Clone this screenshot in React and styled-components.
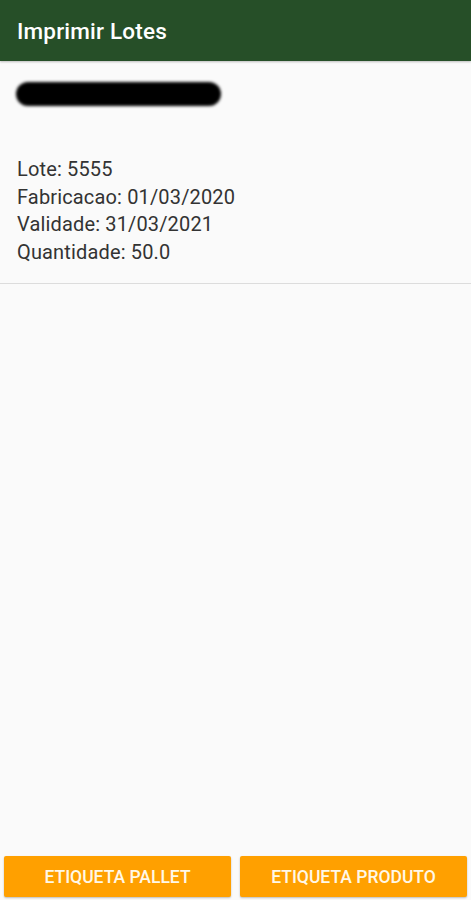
import React from "react";
import styled, { createGlobalStyle } from "styled-components";

const GlobalStyles = createGlobalStyle`
  html, body {
    margin: 0;
    padding: 0;
    background: #fafafa;
    font-family: Roboto, "Liberation Sans", sans-serif;
  }
`;

const lote = {
  numero: "5555",
  fabricacao: "01/03/2020",
  validade: "31/03/2021",
  quantidade: "50.0",
};

const App = () => {
  return (
    <>
      <GlobalStyles />
      <Page>
        <Header>
          <Title>Imprimir Lotes</Title>
        </Header>
        <Card>
          <Redacted />
          <Info>
            <Line>Lote: {lote.numero}</Line>
            <Line>Fabricacao: {lote.fabricacao}</Line>
            <Line>Validade: {lote.validade}</Line>
            <Line>Quantidade: {lote.quantidade}</Line>
          </Info>
        </Card>
        <Spacer />
        <Footer>
          <Button>Etiqueta Pallet</Button>
          <Button>Etiqueta Produto</Button>
        </Footer>
      </Page>
    </>
  );
};

const Page = styled.div`
  height: 900px;
  display: flex;
  flex-direction: column;
  background: #fafafa;
`;
const Header = styled.div`
  height: 61px;
  background: #264f28;
  display: flex;
  align-items: center;
  padding: 0 17px;
  box-shadow: 0 1px 2px rgba(0, 0, 0, 0.25);
`;
const Title = styled.h1`
  margin: 0;
  color: #ffffff;
  font-size: 22.5px;
  font-weight: 500;
  letter-spacing: 0.2px;
`;
const Card = styled.div`
  padding: 21px 17px 16px;
  border-bottom: 1px solid #dcdcdc;
`;
const Redacted = styled.div`
  width: 205px;
  height: 24px;
  margin-left: -1px;
  background: #000;
  border-radius: 12px;
  filter: blur(1.8px);
`;
const Info = styled.div`
  margin-top: 50px;
  display: flex;
  flex-direction: column;
`;
const Line = styled.div`
  font-size: 20px;
  line-height: 27.7px;
  letter-spacing: 0.15px;
  color: #333333;
`;
const Spacer = styled.div`
  flex: 1;
`;
const Footer = styled.div`
  display: grid;
  grid-template-columns: 1fr 1fr;
  gap: 9px;
  padding: 0 4px 3px;
`;
const Button = styled.button`
  height: 41px;
  border: none;
  border-radius: 2px;
  background: #ffa000;
  color: #fff8e8;
  font-family: Roboto, "Liberation Sans", sans-serif;
  font-size: 17.5px;
  font-weight: 500;
  text-transform: uppercase;
  box-shadow: 0 1px 2px rgba(0, 0, 0, 0.25);
`;

export default App;
